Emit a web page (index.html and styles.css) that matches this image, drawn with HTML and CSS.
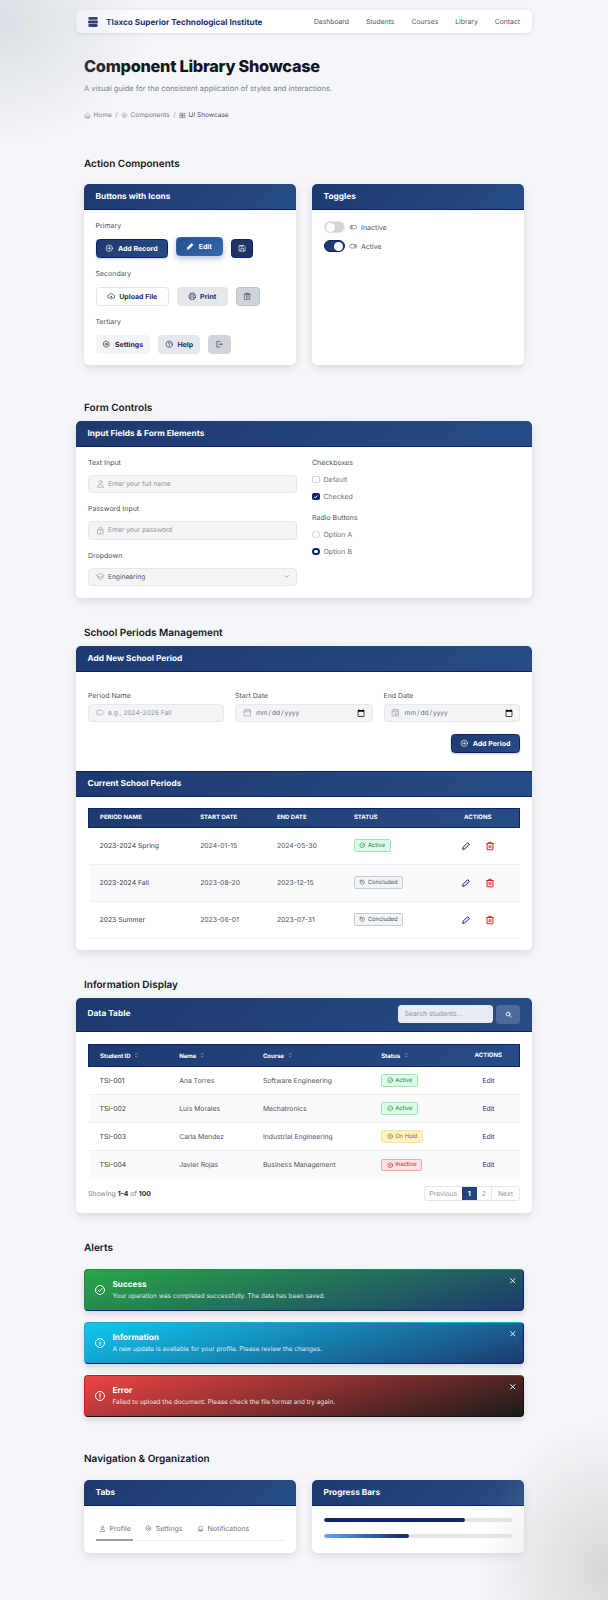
FILE: index.html
```html
<!DOCTYPE html>
<html lang="en">
<head>
<meta charset="utf-8">
<title>Component Library Showcase</title>
<link rel="stylesheet" href="styles.css">
</head>
<body>
<svg class="sprite" aria-hidden="true">
<defs>
<symbol id="i-home" viewBox="0 0 24 24"><path d="M4 10.500 12 4l8 6.500V20H4zM9 20v-6h6v6"/></symbol>
<symbol id="i-box" viewBox="0 0 24 24"><path d="M12 3l9 9-9 9-9-9zM7 8l10 8M17 8L7 16"/></symbol>
<symbol id="i-grid" viewBox="0 0 24 24"><path d="M4 4h7v7H4zM13 4h7v7h-7zM4 13h7v7H4zM13 13h7v7h-7z"/></symbol>
<symbol id="i-plus-c" viewBox="0 0 24 24"><circle cx="12" cy="12" r="9"/><path d="M12 7.500v9M7.500 12h9"/></symbol>
<symbol id="i-pencil" viewBox="0 0 24 24"><path d="M4 20l1-5L16 4l4 4L9 19z"/></symbol>
<symbol id="i-save" viewBox="0 0 24 24"><path d="M4 4h13l3 3v13H4zM8 20v-7h8v7M8 4v4h6V4"/></symbol>
<symbol id="i-upload" viewBox="0 0 24 24"><path d="M7 18a5 5 0 0 1-.5-10A6 6 0 0 1 18 9a4.500 4.500 0 0 1-1 9M12 20v-8M8.500 15l3.500-3.500 3.500 3.500"/></symbol>
<symbol id="i-print" viewBox="0 0 24 24"><path d="M7 8V3h10v5M7 17H3V8h18v9h-4M7 14h10v7H7z"/></symbol>
<symbol id="i-trash" viewBox="0 0 24 24"><path d="M5 6h14v15H5zM3 6h18M9 6V3h6v3M10 10v7M14 10v7"/></symbol>
<symbol id="i-gear" viewBox="0 0 24 24"><path d="M12 3l7.500 4.300v9.400L12 21l-7.500-4.300V7.300z"/><circle cx="12" cy="12" r="3"/></symbol>
<symbol id="i-help" viewBox="0 0 24 24"><circle cx="12" cy="12" r="9"/><path d="M9.500 9.500a2.500 2.500 0 1 1 3.500 2.300c-.7.3-1 .8-1 1.700M12 16.500v.5"/></symbol>
<symbol id="i-logout" viewBox="0 0 24 24"><path d="M14 4H5v16h9M10 12h10M17 9l3 3-3 3"/></symbol>
<symbol id="i-toggle-off" viewBox="0 0 24 24"><rect x="2" y="7" width="20" height="10" rx="5"/><circle cx="7" cy="12" r="2"/></symbol>
<symbol id="i-toggle-on" viewBox="0 0 24 24"><rect x="2" y="7" width="20" height="10" rx="5"/><circle cx="17" cy="12" r="2.500"/></symbol>
<symbol id="i-user" viewBox="0 0 24 24"><circle cx="12" cy="8" r="4"/><path d="M4 21c0-4 3.500-6 8-6s8 2 8 6z"/></symbol>
<symbol id="i-lock" viewBox="0 0 24 24"><path d="M5 10h14v11H5zM8 10V7a4 4 0 0 1 8 0v3M12 14.500v2.500"/></symbol>
<symbol id="i-grad" viewBox="0 0 24 24"><path d="M2 9l10-5 10 5-10 5zM6 11.500V17c3 3 9 3 12 0v-5.500"/></symbol>
<symbol id="i-chev" viewBox="0 0 24 24"><path d="M6 9l6 6 6-6"/></symbol>
<symbol id="i-tag" viewBox="0 0 24 24"><path d="M4 6h11l6 6-6 6H4z"/></symbol>
<symbol id="i-cal" viewBox="0 0 24 24"><path d="M4 5h16v16H4zM4 10h16M8 3v4M16 3v4"/></symbol>
<symbol id="i-cal2" viewBox="0 0 24 24"><path d="M4 5h16v16H4zM4 10h16M8 3v4M16 3v4M12 15h4v3h-4z"/></symbol>
<symbol id="i-check-c" viewBox="0 0 24 24"><circle cx="12" cy="12" r="9"/><path d="M8 12l3 3 5-6"/></symbol>
<symbol id="i-hist" viewBox="0 0 24 24"><path d="M4 12a8 8 0 1 0 2.500-5.800L4 8.500M4 4v4.500h4.500M12 7.500V12l3 2"/></symbol>
<symbol id="i-pause" viewBox="0 0 24 24"><circle cx="12" cy="12" r="9"/><path d="M10 9v6M14 9v6"/></symbol>
<symbol id="i-x-c" viewBox="0 0 24 24"><circle cx="12" cy="12" r="9"/><path d="M9 9l6 6M15 9l-6 6"/></symbol>
<symbol id="i-info" viewBox="0 0 24 24"><circle cx="12" cy="12" r="9"/><path d="M12 11v5.500M12 7.500v.5"/></symbol>
<symbol id="i-warn" viewBox="0 0 24 24"><circle cx="12" cy="12" r="9"/><path d="M12 7v6.500M12 16v.5"/></symbol>
<symbol id="i-x" viewBox="0 0 24 24"><path d="M5 5l14 14M19 5L5 19"/></symbol>
<symbol id="i-search" viewBox="0 0 24 24"><circle cx="10.500" cy="10.500" r="6.500"/><path d="M15.500 15.500L21 21"/></symbol>
<symbol id="i-sort" viewBox="0 0 24 24"><path d="M8 9l4-4 4 4M8 15l4 4 4-4"/></symbol>
<symbol id="i-bell" viewBox="0 0 24 24"><path d="M6 18V10a6 6 0 0 1 12 0v8zM4 18h16M10 21h4"/></symbol>
</defs>
</svg>

<div class="page">
  <nav class="topnav">
    <a class="brand">
      <svg class="logo" viewBox="0 0 10 10"><rect x="0.300" y="0" width="9.400" height="2.800" rx="1.400"/><rect x="0" y="3.500" width="10" height="2.900" rx="1.200"/><rect x="0.300" y="7.100" width="9.400" height="2.900" rx="1.400"/></svg>
      <span>Tlaxco Superior Technological Institute</span>
    </a>
    <ul class="navlinks">
      <li>Dashboard</li><li>Students</li><li>Courses</li><li>Library</li><li>Contact</li>
    </ul>
  </nav>

  <header class="hero">
    <h1>Component Library Showcase</h1>
    <p class="lead">A visual guide for the consistent application of styles and interactions.</p>
    <div class="crumbs">
      <span class="crumb"><svg class="ico"><use href="#i-home"/></svg>Home</span><span class="sep">/</span>
      <span class="crumb"><svg class="ico"><use href="#i-box"/></svg>Components</span><span class="sep">/</span>
      <span class="crumb current"><svg class="ico"><use href="#i-grid"/></svg>UI Showcase</span>
    </div>
  </header>

  <section class="sec sec-action">
    <h2>Action Components</h2>
    <div class="two">
      <div class="card">
        <div class="card-head">Buttons with Icons</div>
        <div class="card-body btn-body">
          <div class="lbl">Primary</div>
          <div class="btn-row">
            <button class="btn b-primary wide1"><svg class="ico i8"><use href="#i-plus-c"/></svg>Add Record</button>
            <button class="btn b-raised wide2"><svg class="ico i8 solid"><use href="#i-pencil"/></svg>Edit</button>
            <button class="btn b-dark sq1"><svg class="ico i8"><use href="#i-save"/></svg></button>
          </div>
          <div class="lbl">Secondary</div>
          <div class="btn-row">
            <button class="btn b-white wide3"><svg class="ico i8"><use href="#i-upload"/></svg>Upload File</button>
            <button class="btn b-gray wide4"><svg class="ico i8"><use href="#i-print"/></svg>Print</button>
            <button class="btn b-gray2 sq2"><svg class="ico i8"><use href="#i-trash"/></svg></button>
          </div>
          <div class="lbl">Tertiary</div>
          <div class="btn-row last">
            <button class="btn b-soft wide5"><svg class="ico i8"><use href="#i-gear"/></svg>Settings</button>
            <button class="btn b-gray wide6"><svg class="ico i8"><use href="#i-help"/></svg>Help</button>
            <button class="btn b-gray3 sq3"><svg class="ico i8"><use href="#i-logout"/></svg></button>
          </div>
        </div>
      </div>
      <div class="card">
        <div class="card-head">Toggles</div>
        <div class="card-body toggles">
          <div class="toggle-row"><span class="switch"><span class="knob"></span></span><svg class="ico i8"><use href="#i-toggle-off"/></svg><span>Inactive</span></div>
          <div class="toggle-row"><span class="switch on"><span class="knob"></span></span><svg class="ico i8"><use href="#i-toggle-on"/></svg><span>Active</span></div>
        </div>
      </div>
    </div>
  </section>

  <section class="sec">
    <h2 class="tight">Form Controls</h2>
    <div class="card bleed">
      <div class="card-head">Input Fields &amp; Form Elements</div>
      <div class="form-grid">
        <div class="form-col">
          <div class="lbl">Text Input</div>
          <label class="field"><svg class="ico i9"><use href="#i-user"/></svg><input type="text" placeholder="Enter your full name"></label>
          <div class="lbl">Password Input</div>
          <label class="field"><svg class="ico i9"><use href="#i-lock"/></svg><input type="password" placeholder="Enter your password"></label>
          <div class="lbl">Dropdown</div>
          <div class="field select"><svg class="ico i9"><use href="#i-grad"/></svg><span class="value">Engineering</span><svg class="ico i7 chev"><use href="#i-chev"/></svg></div>
        </div>
        <div class="choice-col">
          <div class="lbl">Checkboxes</div>
          <div class="choice"><span class="check"></span>Default</div>
          <div class="choice"><span class="check on"><svg viewBox="0 0 10 10"><path d="M2 5.200l2.200 2L8 3"/></svg></span>Checked</div>
          <div class="lbl gap">Radio Buttons</div>
          <div class="choice"><span class="radio"></span>Option A</div>
          <div class="choice"><span class="radio on"></span>Option B</div>
        </div>
      </div>
    </div>
  </section>

  <section class="sec">
    <h2 class="tight">School Periods Management</h2>
    <div class="card bleed">
      <div class="card-head">Add New School Period</div>
      <div class="period-form">
        <div class="period-fields">
          <div>
            <div class="lbl">Period Name</div>
            <label class="field"><svg class="ico i9"><use href="#i-tag"/></svg><input type="text" placeholder="e.g., 2024-2025 Fall"></label>
          </div>
          <div>
            <div class="lbl">Start Date</div>
            <label class="field"><svg class="ico i9"><use href="#i-cal"/></svg><input type="date"></label>
          </div>
          <div>
            <div class="lbl">End Date</div>
            <label class="field"><svg class="ico i9"><use href="#i-cal2"/></svg><input type="date"></label>
          </div>
        </div>
        <div class="form-actions"><button class="btn b-primary add-period"><svg class="ico i8"><use href="#i-plus-c"/></svg>Add Period</button></div>
      </div>
      <div class="card-head flat">Current School Periods</div>
      <div class="table-wrap periods">
        <table>
          <colgroup><col class="p1"><col class="p2"><col class="p3"><col class="p4"><col class="p5"></colgroup>
          <thead><tr class="caps"><th>Period Name</th><th>Start Date</th><th>End Date</th><th>Status</th><th class="center">Actions</th></tr></thead>
          <tbody>
            <tr><td class="strong first">2023-2024 Spring</td><td>2024-01-15</td><td>2024-05-30</td><td><span class="badge ok"><svg class="ico i6"><use href="#i-check-c"/></svg>Active</span></td><td class="actions"><svg class="act edit"><use href="#i-pencil"/></svg><svg class="act del"><use href="#i-trash"/></svg></td></tr>
            <tr><td class="strong first">2023-2024 Fall</td><td>2023-08-20</td><td>2023-12-15</td><td><span class="badge done"><svg class="ico i6"><use href="#i-hist"/></svg>Concluded</span></td><td class="actions"><svg class="act edit"><use href="#i-pencil"/></svg><svg class="act del"><use href="#i-trash"/></svg></td></tr>
            <tr><td class="strong first">2023 Summer</td><td>2023-06-01</td><td>2023-07-31</td><td><span class="badge done"><svg class="ico i6"><use href="#i-hist"/></svg>Concluded</span></td><td class="actions"><svg class="act edit"><use href="#i-pencil"/></svg><svg class="act del"><use href="#i-trash"/></svg></td></tr>
          </tbody>
        </table>
      </div>
    </div>
  </section>

  <section class="sec">
    <h2 class="tight">Information Display</h2>
    <div class="card bleed">
      <div class="card-head with-search">
        <span>Data Table</span>
        <div class="search"><input type="text" placeholder="Search students..."><button class="search-btn"><svg class="ico i7"><use href="#i-search"/></svg></button></div>
      </div>
      <div class="table-wrap students">
        <table>
          <colgroup><col class="s1"><col class="s2"><col class="s3"><col class="s4"><col class="s5"></colgroup>
          <thead><tr>
            <th>Student ID<svg class="ico sort"><use href="#i-sort"/></svg></th>
            <th>Name<svg class="ico sort"><use href="#i-sort"/></svg></th>
            <th>Course<svg class="ico sort"><use href="#i-sort"/></svg></th>
            <th>Status<svg class="ico sort"><use href="#i-sort"/></svg></th>
            <th class="center upper">Actions</th>
          </tr></thead>
          <tbody>
            <tr><td class="strong">TSI-001</td><td>Ana Torres</td><td>Software Engineering</td><td><span class="badge ok"><svg class="ico i6"><use href="#i-check-c"/></svg>Active</span></td><td class="center link">Edit</td></tr>
            <tr><td class="strong">TSI-002</td><td>Luis Morales</td><td>Mechatronics</td><td><span class="badge ok"><svg class="ico i6"><use href="#i-check-c"/></svg>Active</span></td><td class="center link">Edit</td></tr>
            <tr><td class="strong">TSI-003</td><td>Carla Mendez</td><td>Industrial Engineering</td><td><span class="badge hold"><svg class="ico i6"><use href="#i-pause"/></svg>On Hold</span></td><td class="center link">Edit</td></tr>
            <tr><td class="strong">TSI-004</td><td>Javier Rojas</td><td>Business Management</td><td><span class="badge off"><svg class="ico i6"><use href="#i-x-c"/></svg>Inactive</span></td><td class="center link">Edit</td></tr>
          </tbody>
        </table>
        <div class="table-foot">
          <span class="showing">Showing <b>1-4</b> of <b>100</b></span>
          <div class="pager"><span class="pg prev">Previous</span><span class="pg cur">1</span><span class="pg num">2</span><span class="pg next">Next</span></div>
        </div>
      </div>
    </div>
  </section>

  <section class="sec">
    <h2 class="alerts-title">Alerts</h2>
    <div class="alerts">
      <div class="alert a-success"><svg class="ico a-ico"><use href="#i-check-c"/></svg><div><strong>Success</strong><p>Your operation was completed successfully. The data has been saved.</p></div><svg class="ico a-x"><use href="#i-x"/></svg></div>
      <div class="alert a-info"><svg class="ico a-ico"><use href="#i-info"/></svg><div><strong>Information</strong><p>A new update is available for your profile. Please review the changes.</p></div><svg class="ico a-x"><use href="#i-x"/></svg></div>
      <div class="alert a-error"><svg class="ico a-ico"><use href="#i-warn"/></svg><div><strong>Error</strong><p>Failed to upload the document. Please check the file format and try again.</p></div><svg class="ico a-x"><use href="#i-x"/></svg></div>
    </div>
  </section>

  <section class="sec sec-nav">
    <h2>Navigation &amp; Organization</h2>
    <div class="two">
      <div class="card">
        <div class="card-head">Tabs</div>
        <div class="card-body tabs-body">
          <div class="tabs">
            <span class="tab active"><svg class="ico i7"><use href="#i-user"/></svg>Profile</span>
            <span class="tab"><svg class="ico i7"><use href="#i-gear"/></svg>Settings</span>
            <span class="tab"><svg class="ico i7"><use href="#i-bell"/></svg>Notifications</span>
          </div>
        </div>
      </div>
      <div class="card">
        <div class="card-head">Progress Bars</div>
        <div class="card-body bars">
          <div class="bar"><span class="fill navy" style="width:75%"></span></div>
          <div class="bar"><span class="fill blue" style="width:45%"></span></div>
        </div>
      </div>
    </div>
  </section>
</div>
</body>
</html>
```
FILE: styles.css
```css
* { box-sizing: border-box; }
html, body { margin: 0; }
body {
  height: 1600px;
  overflow: hidden;
  font-family: Inter, "Liberation Sans", sans-serif;
  text-rendering: geometricPrecision;
  color: #4b5563;
  background: #f5f6f9;
}
body::after {
  content: ""; position: fixed; inset: 0; pointer-events: none;
  background:
    radial-gradient(ellipse 150px 125px at 0 20px, rgba(190,197,207,.5), rgba(190,197,207,0) 100%),
    radial-gradient(ellipse 130px 150px at 608px 1570px, rgba(185,185,185,.5), rgba(185,185,185,0) 100%);
}
.sprite { position: absolute; width: 0; height: 0; }
.page { width: 456px; margin: 0 auto; padding-top: 10px; }

.ico { width: 8px; height: 8px; flex: none; fill: none; stroke: currentColor; stroke-width: 2; stroke-linecap: round; stroke-linejoin: round; }
.i6 { width: 6.500px; height: 6.500px; }
.i7 { width: 7px; height: 7px; }
.i8 { width: 8.500px; height: 8.500px; }
.i9 { width: 9px; height: 9px; }
.solid { fill: currentColor; }

.topnav {
  height: 23px; display: flex; align-items: center; justify-content: space-between;
  background: #fff; border-radius: 5px; padding: 0 12px;
  box-shadow: 0 1px 4px rgba(0,0,0,.12);
}
.brand { display: flex; align-items: center; gap: 8px; font-size: 8.200px; font-weight: 700; color: #1b2f6b; white-space: nowrap; }
.logo { width: 10px; height: 10px; fill: #12265f; }
.navlinks { display: flex; gap: 17px; list-style: none; margin: 0; padding: 0; font-size: 6.800px; color: #4b5563; font-weight: 400; }

.hero { padding: 0 8px; }
h1 { margin: 20px 0 0; font-size: 16.300px; line-height: 26px; font-weight: 800; color: #11151c; letter-spacing: -.25px; }
.lead { margin: 5px 0 0; font-size: 7.500px; line-height: 10px; color: #7a8290; }
.crumbs { display: flex; align-items: center; margin-top: 16px; height: 10px; font-size: 6.500px; color: #747c89; }
.crumb { display: flex; align-items: center; gap: 2.500px; }
.crumb .ico { width: 7px; height: 7px; stroke-width: 1.600px; }
.crumb.current { color: #4b5563; }
.sep { margin: 0 3.500px; color: #8b93a0; }

.sec { padding: 0 8px; margin-top: 28px; }
.sec-action { margin-top: 37px; }
.sec-nav { margin-top: 35px; }
h2 { margin: 0 0 13px; font-size: 10px; line-height: 14px; font-weight: 600; color: #11151c; }
.sec-nav h2 { margin-bottom: 14px; }
h2.tight { margin-bottom: 6px; }
h2.alerts-title { margin-bottom: 14.500px; }
.sec-action + .sec { margin-top: 36px; }

.two { display: grid; grid-template-columns: 212px 212px; gap: 16px; }
.card { background: #fff; border-radius: 5px; box-shadow: 0 3px 8px rgba(15,23,42,.12); overflow: hidden; }
.bleed { margin: 0 -8px; }
.card-head {
  height: 26px; display: flex; align-items: center; padding: 1.500px 11.500px 0;
  background: linear-gradient(135deg, #1e3a70, #274c85);
  border-bottom: 1px solid #0c2170;
  color: #fff; font-size: 8.300px; font-weight: 700;
}
.card-head.flat { border-top: 1px solid #0c2170; }
.lbl { font-size: 7px; line-height: 10px; color: #4b5563; margin-bottom: 8px; }

.btn-body { padding: 11px 11.500px; }
.btn-row { display: flex; gap: 8px; margin-bottom: 11.500px; height: 18.500px; }
.btn-row.last { margin-bottom: 0; }
.btn {
  display: inline-flex; align-items: center; justify-content: center; gap: 4px;
  height: 18.500px; padding: 0; border-radius: 3.500px; border: 1px solid transparent;
  font: 700 7px Inter, "Liberation Sans", sans-serif; text-rendering: geometricPrecision; cursor: pointer;
}
.btn .ico { stroke-width: 1.800px; }
.b-primary { background: linear-gradient(135deg, #1e3a70, #274c85); border-color: #0c2170; color: #fff; box-shadow: 0 1px 2px rgba(0,0,0,.2); }
.b-raised { background: linear-gradient(135deg, #28508f, #3566ad); border-color: #3566ad; color: #fff; box-shadow: 0 3px 6px rgba(30,58,112,.3); transform: translateY(-2px); }
.b-dark { background: #1e3468; border-color: #0c2170; color: #fff; }
.b-white { background: #fff; border-color: #e2e5ea; color: #1b2f6b; }
.b-gray { background: #e5e7eb; border-color: #e5e7eb; color: #1b2f6b; }
.b-gray2 { background: #cfd3da; border-color: #bfc4cc; color: #4b5563; }
.b-soft { background: #f3f4f6; border-color: #f3f4f6; color: #1f2937; }
.b-gray3 { background: #d1d5db; border-color: #d1d5db; color: #374151; }
.wide1 { width: 72px; }
.wide2 { width: 47px; }
.sq1 { width: 22.500px; }
.wide3 { width: 73px; }
.wide4 { width: 51px; }
.sq2 { width: 24px; }
.wide5 { width: 54.500px; }
.wide6 { width: 42px; }
.sq3 { width: 23px; }

.toggles { padding: 11px 11.500px; display: flex; flex-direction: column; gap: 7px; }
.toggle-row { display: flex; align-items: center; gap: 4px; height: 12px; font-size: 7px; color: #4b5563; }
.toggle-row .ico { color: #6b7280; width: 8.500px; height: 8.500px; stroke-width: 1.800px; }
.switch { width: 21px; height: 12px; border-radius: 6px; background: #d1d5db; border: 1px solid #e5e7eb; display: flex; align-items: center; padding: 0 1px; }
.knob { width: 9px; height: 9px; border-radius: 50%; background: #fff; }
.switch.on { background: #1e3a70; border-color: #0c2170; justify-content: flex-end; }

.form-grid { display: grid; grid-template-columns: 209px 1fr; gap: 15px; padding: 11px 12px 0; min-height: 151px; }
.form-col .lbl { margin-bottom: 7px; }
.field {
  display: flex; align-items: center; gap: 3.500px; height: 18.500px; padding: 0 6.500px;
  background: #f3f4f6; border: 1px solid #e5e7eb; border-radius: 3.500px; color: #8d94a1;
  margin-bottom: 11px;
}
.form-col .field:last-child { margin-bottom: 0; }
.field input {
  flex: 1; min-width: 0; border: 0; background: none; outline: none; padding: 0;
  font: 400 6.600px Inter, "Liberation Sans", sans-serif; text-rendering: geometricPrecision; color: #6b7280;
}
.field input::placeholder { color: #8d94a1; opacity: 1; }
.field input[type="date"] { height: 16px; }
.field input::-webkit-calendar-picker-indicator { width: 8px; height: 8px; padding: 0; margin: 0; }
.value { font-size: 6.600px; color: #4b5563; flex: 1; }
.chev { color: #4b5563; }
.field .ico { stroke-width: 1.500px; }

.choice-col .lbl { margin-bottom: 7px; }
.choice-col .lbl.gap { margin-top: 11px; margin-bottom: 7px; }
.choice { display: flex; align-items: center; gap: 4px; height: 10px; margin-bottom: 7px; font-size: 7px; color: #6b7280; }
.check, .radio { width: 7.500px; height: 7.500px; border: 1px solid #cbd0d7; background: #fff; flex: none; display: block; }
.check { border-radius: 1.500px; }
.check.on { background: #0f2268; border-color: #0f2268; }
.check svg { display: block; fill: none; stroke: #fff; stroke-width: 1.800px; }
.radio { border-radius: 50%; }
.radio.on { border: 2.500px solid #0f2268; }

.period-form { padding: 19px 12px 0; height: 99px; }
.period-fields { display: grid; grid-template-columns: 136px 137.500px 136.500px; gap: 11px; }
.period-fields .lbl { margin-bottom: 3px; }
.period-fields .field { margin-bottom: 0; }
.form-actions { display: flex; justify-content: flex-end; margin-top: 11.500px; }
.add-period { width: 69.500px; height: 19px; }

.table-wrap { padding: 11px 12px 11px; }
table { width: 100%; border-collapse: collapse; table-layout: fixed; font-size: 6.800px; }
.p1 { width: 100.700px; }
.p2 { width: 76.700px; }
.p3 { width: 77px; }
.p4 { width: 93.600px; }
.s1 { width: 79.700px; }
.s2 { width: 83.700px; }
.s3 { width: 118.300px; }
.s4 { width: 87.300px; }
thead tr { background: linear-gradient(135deg, #1e3a70, #274c85); }
th {
  height: 19px; padding: 0 11px; text-align: left; color: #fff; font-size: 6px; font-weight: 700;
  border-top: 1px solid #0c2170; border-bottom: 1px solid #0c2170;
}
th:first-child { border-left: 1px solid #0c2170; }
th:last-child { border-right: 1px solid #0c2170; }
.caps th, th.upper { text-transform: uppercase; }
td { padding: 0 11px; height: 37px; border-bottom: 1px solid #eef0f3; color: #4b5563; white-space: nowrap; }
tbody tr:nth-child(even) td { background: #f9fafb; }
.strong { color: #374151; }
.center { text-align: center; padding: 0; }
.actions { padding: 0; }
.act { display: inline-block; width: 10px; height: 10px; fill: none; stroke-width: 2.400px; stroke-linejoin: round; vertical-align: middle; }
.act.edit { stroke: #0f2268; margin: 0 14px 0 25px; }
.act.del { stroke: #e02424; }
.badge {
  display: inline-flex; align-items: center; gap: 2px; height: 12.500px; padding: 0 4.500px;
  font-size: 5.800px; border-radius: 1.500px; border: 1px solid; vertical-align: middle;
}
.ok { background: #dcfce7; border-color: #9ce8b5; color: #15803d; }
.done { background: #f3f4f6; border-color: #c5c9d0; color: #4b5563; }
.hold { background: #fef3c7; border-color: #fde68a; color: #a16207; }
.off { background: #fee2e2; border-color: #fca5a5; color: #b91c1c; }

.card-head.with-search { height: 34px; justify-content: space-between; padding: 0 12px 0 11.500px; }
.search { display: flex; gap: 3.500px; }
.search input { width: 95px; height: 18.500px; border: 0; border-radius: 3.500px; background: #e9ecf2; padding: 0 7px; font: 400 6.800px Inter, "Liberation Sans", sans-serif; text-rendering: geometricPrecision; outline: none; }
.search input::placeholder { color: #8d94a1; opacity: 1; }
.search-btn { width: 24px; height: 19px; border: 0; border-radius: 3.500px; background: #4d6b99; color: #fff; display: flex; align-items: center; justify-content: center; padding: 0; }
.search-btn .ico { stroke-width: 3; }
.students { padding: 12px 12px 11.500px; }
.students td { height: 28px; }
.students tbody tr:last-child td { border-bottom: 0; }
.students th { height: 22.500px; }
.sort { width: 6.500px; height: 6.500px; margin-left: 2.500px; vertical-align: -1px; color: #b9c3d6; stroke-width: 2; }
.link { color: #1e3468; }
.table-foot { display: flex; align-items: center; justify-content: space-between; margin-top: 7.500px; height: 15px; }
.showing { font-size: 6.800px; color: #7a8290; }
.showing b { color: #1f2937; font-weight: 700; }
.pager { display: flex; height: 15px; font-size: 6.800px; color: #8d94a1; border: 1px solid #e5e7eb; border-radius: 3px; overflow: hidden; background: #fff; }
.pg { display: flex; align-items: center; justify-content: center; }
.prev { width: 37.500px; }
.cur { width: 14.500px; background: linear-gradient(135deg, #1e3a70, #274c85); color: #fff; font-weight: 700; }
.num { width: 15.500px; border-right: 1px solid #e5e7eb; }
.next { width: 27px; }

.alerts { display: flex; flex-direction: column; gap: 11.500px; }
.alert {
  position: relative; height: 41.500px; border-radius: 4px; display: flex; align-items: center; gap: 6.500px; padding: 0 9px;
  color: #fff; box-shadow: 0 3px 6px rgba(15,23,42,.14); border: 1px solid;
}
.a-ico { width: 12px; height: 12px; stroke-width: 2; }
.alert strong { display: block; font-size: 8.200px; line-height: 11px; font-weight: 700; }
.alert p { margin: 2px 0 0; font-size: 6.400px; line-height: 9px; opacity: .85; }
.a-x { position: absolute; right: 7px; top: 7px; width: 7.500px; height: 7.500px; stroke-width: 3; }
.a-success { background: linear-gradient(165deg, #28a745, #1e3a70); border-color: #1c8a52 #0c2170 #0c2170 #1c8a52; }
.a-info { background: linear-gradient(165deg, #0dcaf0, #1e3a70); border-color: #16a9d8 #0c2170 #0c2170 #16a9d8; }
.a-error { background: linear-gradient(165deg, #ef4444, #1a1a1a); border-color: #c81e1e #111 #111 #c81e1e; }

.tabs-body { padding: 12px 11.500px 0; height: 47px; }
.tabs { display: flex; gap: 14px; border-bottom: 1px solid #eceef2; height: 23px; padding: 0 3px; font-size: 7px; color: #6b7280; position: relative; }
.tab { display: flex; align-items: center; gap: 4px; height: 22px; }
.tab.active::after { content: ""; position: absolute; left: 0; bottom: -1px; width: 37px; height: 2px; background: #9aa1ad; }
.bars { padding: 12px 11.500px 0; height: 47px; display: flex; flex-direction: column; gap: 11.500px; }
.bar { height: 4.500px; border-radius: 3px; background: #e5e7eb; overflow: hidden; }
.fill { display: block; height: 100%; border-radius: 3px; }
.navy { background: #10266b; }
.blue { background: linear-gradient(90deg, #60a5fa, #10266b); }
```
